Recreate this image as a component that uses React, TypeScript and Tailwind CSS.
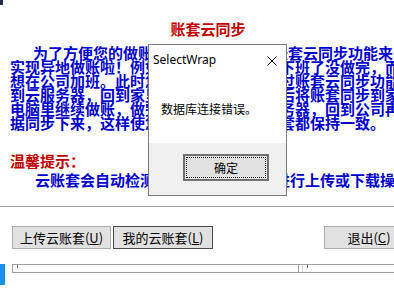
import React from 'react';

// ─── Content ──────────────────────────────────────────────────────────────────

const CJK = "font-['SimSun','Noto_Sans_CJK_SC',sans-serif]";

const PARAGRAPH_LINES: string[] = [
    '为了方便您的做账，我们特别推出了账套云同步功能来',
    '实现异地做账啦！例如：您今天在公司里下班了没做完，而',
    '想在公司加班。此时您就可以先在公司通过账套云同步功能',
    '到云服务器，回到家里，再通过云同步然后将账套同步到家',
    '电脑里继续做账，做完后再次上传到云服务器，回到公司再',
    '据同步下来，这样使您在家里和公司的账套都保持一致。',
];

// ─── Pieces ───────────────────────────────────────────────────────────────────

const WinButton: React.FC<{ label: string; hotkey: string; focused?: boolean; className?: string }> = ({
    label,
    hotkey,
    focused,
    className = '',
}) => (
    <div
        className={`h-[23px] flex items-center justify-center bg-[#e1e1e1] border text-[13px] text-black ${
            focused ? 'border-[#4a4a4a]' : 'border-[#adadad]'
        } ${className}`}
    >
        <span className={CJK}>
            {label}(<span className="underline">{hotkey}</span>)
        </span>
    </div>
);

const MessageBox: React.FC = () => (
    <div className="absolute left-[148px] top-[44px] w-[139px] h-[152px] bg-white border border-[#7a7a7a] flex flex-col">
        {/* Title bar */}
        <div className="h-[29px] flex items-center justify-between pl-[4px] pr-[9px]">
            <span className="font-['Noto_Sans','Open_Sans',sans-serif] text-[12px] text-black">SelectWrap</span>
            <svg width="10" height="10" viewBox="0 0 10 10" className="mt-[2px]">
                <path d="M0.5 0.5 L9.5 9.5 M9.5 0.5 L0.5 9.5" stroke="#000" strokeWidth="1" />
            </svg>
        </div>

        {/* Body */}
        <div className="flex-1 pl-[12px] pt-[22px]">
            <span className={`${CJK} text-[12px] text-black`}>数据库连接错误。</span>
        </div>

        {/* Footer */}
        <div className="h-[52px] bg-[#f0f0f0] flex justify-end items-start pt-[11px] pr-[17px]">
            <div className="w-[86px] h-[27px] bg-[#e1e1e1] border-2 border-[#707070] p-[1px]">
                <div className="w-full h-full border border-dotted border-black flex items-center justify-center">
                    <span className={`${CJK} text-[12px] text-black`}>确定</span>
                </div>
            </div>
        </div>
    </div>
);

// ─── Component ────────────────────────────────────────────────────────────────

const App: React.FC = () => {
    return (
        <div className="relative w-[394px] h-[293px] bg-white overflow-hidden">
            {/* Window icon sliver */}
            <div className="h-[22px]">
                <div className="w-[3px] h-[5px] bg-[#1c2c4c]" />
            </div>

            {/* Title */}
            <div className={`${CJK} w-[416px] text-center text-[15px] leading-[14px] font-bold text-[#c00000]`}>
                账套云同步
            </div>

            {/* Paragraph */}
            <div className={`${CJK} mt-[10px] pl-[10px] text-[15px] leading-[14px] font-bold text-[#0000cc]`}>
                {PARAGRAPH_LINES.map((line, i) => (
                    <div key={i} className={`h-[14px] whitespace-nowrap ${i === 0 ? 'pl-[23px]' : ''}`}>
                        {line}
                    </div>
                ))}
            </div>

            {/* Tip */}
            <div className={`${CJK} mt-[24px] pl-[10px] text-[15px] leading-[14px] font-bold`}>
                <div className="h-[14px] text-[#c00000]">温馨提示：</div>
                <div className="mt-[5px] h-[14px] pl-[25px] whitespace-nowrap text-[#0000cc]">
                    云账套会自动检测本地与云端的账套进行上传或下载操作
                </div>
            </div>

            {/* Separator */}
            <div className="mt-[19px] h-px bg-[#a0a0a0]" />

            {/* Buttons */}
            <div className="mt-[19px] flex pl-[12px]">
                <WinButton label="上传云账套" hotkey="U" className="w-[99px]" />
                <WinButton label="我的云账套" hotkey="L" focused className="w-[100px] ml-[2px]" />
                <WinButton label="退出" hotkey="C" className="w-[90px] ml-auto -mr-[20px]" />
            </div>

            {/* List header strip */}
            <div className="mt-[15px] flex">
                <div className="w-[5px] h-[21px] bg-[#1a8fe8]" />
                <div className="ml-[7px] flex-1 h-[9px] border-t border-l border-b border-[#a0a0a0] flex">
                    <div className="w-[286px] border-r border-[#a0a0a0] pl-[4px]">
                        <div className="w-px h-[3px] bg-[#606060]" />
                    </div>
                    <div className="pl-[4px] border-l border-[#d0d0d0] ml-[3px]">
                        <div className="w-px h-[3px] bg-[#606060]" />
                    </div>
                </div>
            </div>

            <MessageBox />
        </div>
    );
};

export default App;
